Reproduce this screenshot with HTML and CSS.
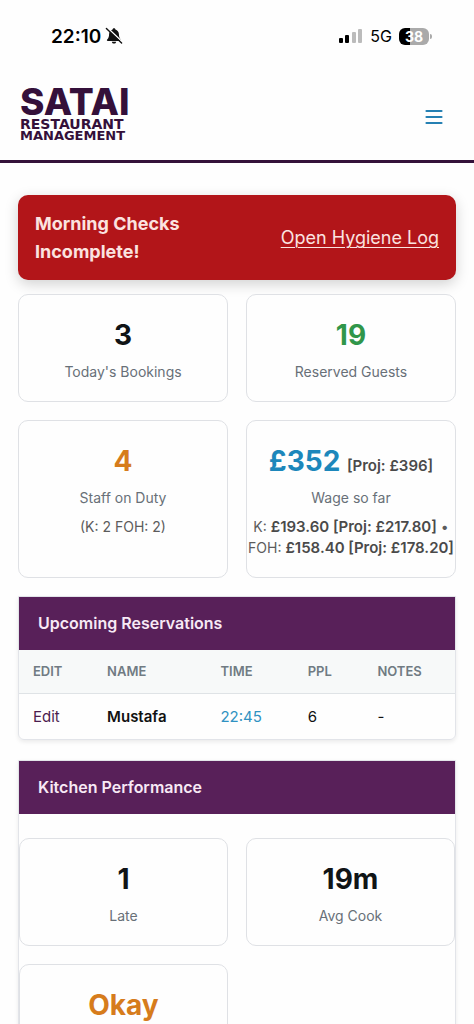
FILE: index.html
```html
<!DOCTYPE html>
<html lang="en">
<head>
<meta charset="utf-8">
<meta name="viewport" content="width=device-width, initial-scale=1">
<title>Satai Restaurant Management</title>
<link rel="stylesheet" href="styles.css">
</head>
<body>
<div class="status">
  <div class="status-group">
    <span class="clock">22:10</span>
    <svg class="bell" viewBox="0 0 18 18" width="18" height="18" aria-hidden="true">
      <path d="M9 1.2c.8 0 1.3.5 1.4 1.2 2 .6 3.4 2.300 3.500 4.600.1 3 .6 4.100 1.900 5.400.6.6.3 1.500-.6 1.500H2.800c-.9 0-1.200-.9-.6-1.500C3.500 11.100 4 10 4.100 7c.1-2.300 1.500-4 3.500-4.600C7.700 1.700 8.200 1.200 9 1.200zM6.800 14.700h4.400c-.2 1.200-1.100 1.900-2.200 1.900s-2-.7-2.200-1.900z" fill="#111"/>
      <path d="M2.600 1.200 17.600 15.200" stroke="#fff" stroke-width="1.600"/>
      <path d="M1.400 1.500 16.600 16" stroke="#111" stroke-width="1.400" stroke-linecap="round"/>
    </svg>
  </div>
  <div class="status-group">
    <svg viewBox="0 0 24 16" width="24" height="16" aria-hidden="true">
      <rect x="0" y="10" width="4" height="5" rx="1" fill="#000"/>
      <rect x="6" y="7" width="4" height="8" rx="1" fill="#000"/>
      <rect x="13" y="4" width="4" height="11" rx="1" fill="#bbb"/>
      <rect x="19" y="1" width="4" height="14" rx="1" fill="#bbb"/>
    </svg>
    <span class="network">5G</span>
    <span class="battery"><span class="battery-level">38</span><span class="battery-tip"></span></span>
  </div>
</div>
<header class="header">
  <a class="logo" href="#"><span class="logo-name">SATAI</span><span class="logo-top">RESTAURANT</span><span class="logo-bottom">MANAGEMENT</span></a>
  <button class="menu" type="button" aria-label="Menu">
    <svg viewBox="0 0 18 18" width="18" height="18" aria-hidden="true"><path d="M1.500 4h15M1.500 10h15M1.500 16h15" stroke="#2580b3" stroke-width="2.200" stroke-linecap="round"/></svg>
  </button>
</header>
<main class="content">
  <div class="alert" role="alert">
    <strong class="alert-title">Morning Checks Incomplete!</strong>
    <a class="alert-link" href="#">Open Hygiene Log</a>
  </div>
  <div class="cards">
    <div class="card"><div class="value">3</div><div class="label">Today's Bookings</div></div>
    <div class="card"><div class="value green">19</div><div class="label">Reserved Guests</div></div>
    <div class="card"><div class="value orange">4</div><div class="label">Staff on Duty</div><div class="detail">(K: 2 FOH: 2)</div></div>
    <div class="card"><div class="value blue">£352 <span class="projected">[Proj: £396]</span></div><div class="label">Wage so far</div><div class="detail">K: <b>£193.60 [Proj: £217.80]</b> •<br>FOH: <b>£158.40 [Proj: £178.20]</b></div></div>
  </div>
  <section class="panel">
    <h2 class="panel-title">Upcoming Reservations</h2>
    <table class="table">
      <thead><tr><th class="col-edit">EDIT</th><th class="col-name">NAME</th><th class="col-time">TIME</th><th class="col-ppl">PPL</th><th>NOTES</th></tr></thead>
      <tbody><tr><td><a class="edit" href="#">Edit</a></td><td class="guest">Mustafa</td><td class="time">22:45</td><td>6</td><td>-</td></tr></tbody>
    </table>
  </section>
  <section class="panel">
    <h2 class="panel-title">Kitchen Performance</h2>
    <div class="cards kitchen">
      <div class="card"><div class="value">1</div><div class="label">Late</div></div>
      <div class="card"><div class="value">19m</div><div class="label">Avg Cook</div></div>
      <div class="card"><div class="value orange">Okay</div></div>
    </div>
  </section>
</main>
</body>
</html>
```
FILE: styles.css
```css
* { box-sizing: border-box; }
body {
  margin: 0;
  background: #fefefe;
  color: #101416;
  font-family: Inter, "Liberation Sans", sans-serif;
  font-size: 14px;
  line-height: 21px;
}
.status {
  display: flex;
  justify-content: space-between;
  align-items: center;
  height: 72px;
  padding: 0 42px 0 51px;
}
.status-group { display: flex; align-items: center; gap: 4px; color: #000; }
.clock { font-size: 19px; font-weight: 600; }
.network { margin: 0 3px; font-size: 16px; }
.battery { display: flex; align-items: center; gap: 1px; }
.battery-level {
  width: 30px;
  border-radius: 6px;
  background: linear-gradient(90deg, #000 38%, #aaa 38%);
  color: #fff;
  font-size: 14px;
  font-weight: 700;
  line-height: 17px;
  text-align: center;
}
.battery-tip { width: 2px; height: 5px; border-radius: 0 2px 2px 0; background: #aaa; }
.header {
  display: flex;
  justify-content: space-between;
  align-items: center;
  height: 91px;
  padding: 0 22px 0 20px;
  border-bottom: 3px solid #34123a;
}
.logo {
  display: flex;
  flex-direction: column;
  padding-bottom: 7px;
  color: #34103a;
  text-decoration: none;
}
.logo-name { font-size: 37px; font-weight: 800; line-height: 34px; }
.logo-top, .logo-bottom { font-family: "DejaVu Sans", sans-serif; font-weight: 700; line-height: 11px; }
.logo-top { font-size: 14px; }
.logo-bottom { font-size: 13px; }
.menu { display: flex; padding: 9px; border: 0; background: none; }
.content { padding: 32px 18px 0; }
.alert {
  display: flex;
  justify-content: space-between;
  align-items: center;
  gap: 16px;
  margin-bottom: 14px;
  padding: 15px 17px 14px;
  border-radius: 10px;
  background: #b21519;
  box-shadow: 0 4px 14px rgba(0, 0, 0, 0.18);
  color: #fbe3e0;
  font-size: 18px;
  line-height: 28px;
}
.alert-title { max-width: 180px; font-weight: 700; }
.alert-link { color: inherit; white-space: nowrap; text-underline-offset: 3px; text-decoration-thickness: 1px; }
.cards { display: grid; grid-template-columns: 1fr 1fr; gap: 18px; }
.card {
  min-width: 0;
  padding: 19px 0;
  border: 1px solid #dfe1e5;
  border-radius: 10px;
  background: #fefefe;
  text-align: center;
}
.value { padding-bottom: 5px; font-size: 28px; font-weight: 700; line-height: 42px; }
.label { color: #687078; }
.detail { margin-top: 8px; color: #5c5c5c; white-space: nowrap; }
.detail b { color: #4a4a4a; font-size: 15px; font-weight: 600; }
.projected { color: #4a4a4a; font-size: 15px; font-weight: 600; line-height: 21px; }
.green { color: #30964a; }
.orange { color: #d67c1c; }
.blue { color: #1c87bb; }
.panel {
  margin-top: 18px;
  border: 1px solid #e2e4e9;
  border-radius: 0 0 6px 6px;
  box-shadow: 0 2px 4px rgba(0, 0, 0, 0.08);
}
.panel + .panel { margin-top: 20px; }
.panel-title {
  margin: 0;
  padding: 16px 19px;
  background: #582059;
  color: #f7e9f5;
  font-size: 16px;
  font-weight: 600;
  line-height: 21px;
}
.table { width: 100%; border-collapse: collapse; table-layout: fixed; text-align: left; }
.table th {
  padding: 11px 14px;
  border-bottom: 1px solid #dfe3e6;
  background: #f7f9f9;
  color: #707b83;
  font-size: 13px;
  font-weight: 600;
}
.table td { padding: 12px 14px; color: #111; font-size: 15px; }
.col-edit { width: 17%; }
.col-name { width: 26%; }
.col-time { width: 20%; }
.col-ppl { width: 16%; }
.edit { color: #4b1d4e; text-decoration: none; }
.table .guest { font-weight: 600; }
.table .time { color: #3092c2; }
.kitchen { padding: 24px 0; }
```
